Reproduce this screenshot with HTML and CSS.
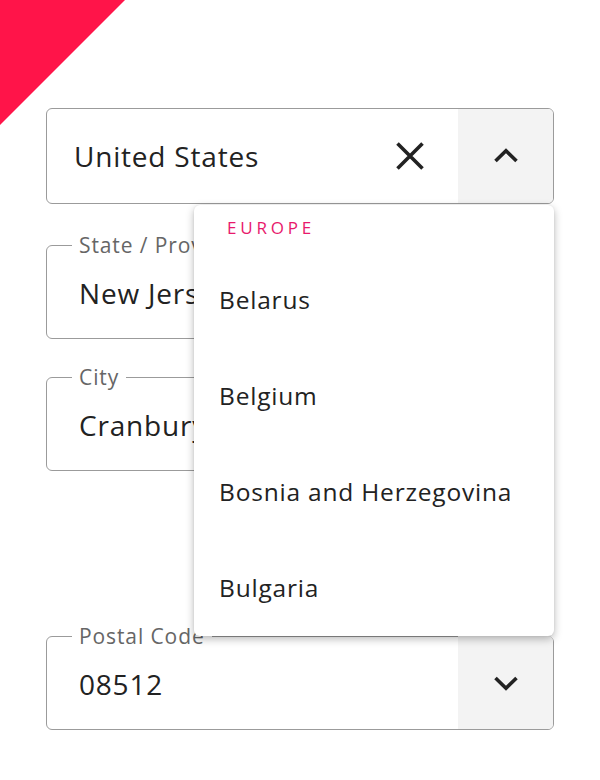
FILE: index.html
```html
<!DOCTYPE html>
<html lang="en">
<head>
<meta charset="utf-8">
<title>Address form</title>
<link rel="stylesheet" href="styles.css">
</head>
<body>
<div class="corner"></div>
<form class="form">
  <div class="select-wrap">
    <div class="field select open">
      <span class="value">United States</span>
      <button type="button" class="clear" aria-label="Clear">
        <svg width="30" height="30" viewBox="0 0 30 30"><path d="M2.5 2.5 L27.5 27.5 M27.5 2.5 L2.5 27.5" stroke="#222" stroke-width="3.6" fill="none"/></svg>
      </button>
      <button type="button" class="toggle" aria-label="Toggle">
        <svg width="26" height="16" viewBox="0 0 26 16"><path d="M2.5 13 L13 2.8 L23.5 13" stroke="#222" stroke-width="3.6" fill="none"/></svg>
      </button>
    </div>
    <div class="menu">
      <div class="group">Europe</div>
      <div class="option">Belarus</div>
      <div class="option">Belgium</div>
      <div class="option">Bosnia and Herzegovina</div>
      <div class="option">Bulgaria</div>
    </div>
  </div>

  <fieldset class="outlined state">
    <legend>State / Province</legend>
    <div class="row"><span class="value">New Jersey</span></div>
  </fieldset>

  <fieldset class="outlined city">
    <legend>City</legend>
    <div class="row"><span class="value">Cranbury</span></div>
  </fieldset>

  <fieldset class="outlined postal">
    <legend>Postal Code</legend>
    <div class="row">
      <span class="value">08512</span>
      <button type="button" class="toggle" aria-label="Toggle">
        <svg width="26" height="16" viewBox="0 0 26 16"><path d="M2.5 3 L13 13.2 L23.5 3" stroke="#222" stroke-width="3.6" fill="none"/></svg>
      </button>
    </div>
  </fieldset>
</form>
</body>
</html>
```

FILE: styles.css
```css
html, body {
  margin: 0;
  padding: 0;
  background: #fff;
}
body {
  position: relative;
  width: 600px;
  height: 780px;
  overflow: hidden;
  font-family: "Open Sans", "Noto Sans", sans-serif;
  color: #222;
}
.corner {
  position: absolute;
  left: 0;
  top: 0;
  width: 125px;
  height: 125px;
  background: #ff1449;
  clip-path: polygon(0 0, 100% 0, 0 100%);
}
.form {
  display: flex;
  flex-direction: column;
  padding: 108px 0 0 46px;
  width: 508px;
}
.select-wrap {
  position: relative;
}
.field.select {
  display: flex;
  align-items: stretch;
  height: 96px;
  box-sizing: border-box;
  border: 1.5px solid #9b9b9b;
  border-radius: 6px;
  overflow: hidden;
}
.select .value {
  flex: 1;
  display: flex;
  align-items: center;
  padding-left: 27px;
  font-size: 28px;
  letter-spacing: 0.8px;
}
button {
  border: 0;
  padding: 0;
  margin: 0;
  background: none;
  font: inherit;
  display: flex;
  align-items: center;
  justify-content: center;
}
.clear {
  width: 60px;
  margin-right: 18px;
}
.toggle {
  width: 95px;
  background: #f3f3f3;
}
.menu {
  position: absolute;
  left: 148px;
  right: 0;
  top: 97px;
  background: #fff;
  border-radius: 6px;
  box-shadow: 0 3px 8px rgba(0,0,0,0.28), 0 0 2px rgba(0,0,0,0.08);
  z-index: 2;
  height: 431px;
}
.group {
  height: 47px;
  box-sizing: border-box;
  padding: 12px 0 0 33px;
  font-size: 17px;
  line-height: 22px;
  letter-spacing: 3.8px;
  text-transform: uppercase;
  color: #e8196c;
}
.option {
  height: 96px;
  display: flex;
  align-items: center;
  padding-left: 25px;
  padding-bottom: 2px;
  box-sizing: border-box;
  font-size: 24.5px;
  letter-spacing: 0.8px;
  color: #222;
}
.outlined {
  margin: 0;
  padding: 0 0 0 25px;
  min-width: 0;
  border: 1.5px solid #9b9b9b;
  border-radius: 6px;
}
.outlined legend {
  padding: 0 7px;
  font-size: 21px;
  line-height: 20px;
  letter-spacing: 0.9px;
  color: #666;
}
.outlined .row {
  display: flex;
  align-items: stretch;
  height: 83px;
}
.outlined .value {
  flex: 1;
  display: flex;
  align-items: center;
  padding-left: 7px;
  padding-bottom: 8px;
  font-size: 28px;
  letter-spacing: 0.8px;
  white-space: nowrap;
  overflow: hidden;
}
.state {
  margin-top: 31px;
}
.city {
  margin-top: 28px;
}
.postal {
  margin-top: 155px;
  padding-right: 0;
}
.postal .toggle {
  margin-top: -10px;
  border-radius: 0 5px 5px 0;
}
```
